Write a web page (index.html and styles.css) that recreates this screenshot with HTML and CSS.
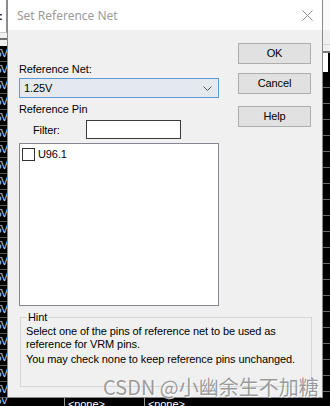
FILE: index.html
```html
<!DOCTYPE html>
<html lang="en">
<head>
    <meta charset="UTF-8">
    <meta name="viewport" content="width=device-width, initial-scale=1.0">
    <title>Set Reference Net</title>
    <link rel="stylesheet" href="styles.css">
</head>
<body>
    <div class="screen">
        <!-- Aplicación de fondo: columna izquierda -->
        <div class="app-left">
            <div class="left-field">:</div>
            <div class="left-bar"></div>
            <div class="cells">
                <div class="cell">5V</div><div class="cell">5V</div><div class="cell">5V</div>
                <div class="cell">5V</div><div class="cell">5V</div><div class="cell">5V</div>
                <div class="cell">5V</div><div class="cell">5V</div><div class="cell">5V</div>
                <div class="cell">5V</div><div class="cell">5V</div><div class="cell">5V</div>
                <div class="cell">5V</div><div class="cell">5V</div><div class="cell">5V</div>
                <div class="cell">5V</div><div class="cell">5V</div><div class="cell">5V</div>
                <div class="cell">5V</div><div class="cell">5V</div><div class="cell">5V</div>
                <div class="cell">5V</div>
            </div>
        </div>

        <!-- Diálogo -->
        <div class="dialog">
            <div class="titlebar">
                <span class="title">Set Reference Net</span>
                <svg class="close" width="11" height="11" viewBox="0 0 11 11">
                    <path d="M0.5 0.5 L10.5 10.5 M10.5 0.5 L0.5 10.5" stroke="#8f8f8f" stroke-width="1" fill="none"/>
                </svg>
            </div>

            <div class="dialog-body">
                <div class="main">
                    <div class="left-col">
                        <div class="lbl">Reference Net:</div>
                        <div class="combo">
                            <span>1.25V</span>
                            <svg class="chevron" width="9" height="5" viewBox="0 0 9 5">
                                <path d="M0.5 0.5 L4.5 4.5 L8.5 0.5" stroke="#555" stroke-width="1" fill="none"/>
                            </svg>
                        </div>
                        <div class="lbl section">Reference Pin</div>
                        <div class="filter-row">
                            <span class="filter-lbl">Filter:</span>
                            <div class="input"></div>
                        </div>
                        <div class="listbox">
                            <div class="item"><span class="check"></span>U96.1</div>
                        </div>
                    </div>

                    <div class="buttons">
                        <div class="btn">OK</div>
                        <div class="btn cancel">Cancel</div>
                        <div class="btn help">Help</div>
                    </div>
                </div>

                <fieldset class="hint">
                    <legend>Hint</legend>
                    <p>Select one of the pins of reference net to be used as<br>reference for VRM pins.</p>
                    <p class="second">You may check none to keep reference pins unchanged.</p>
                </fieldset>
            </div>

            <div class="watermark">CSDN @小幽余生不加糖</div>
        </div>

        <!-- Aplicación de fondo: columna derecha -->
        <div class="app-right">
            <div class="right-head"></div>
            <div class="right-bar"></div>
            <div class="right-cell"></div>
            <div class="rcells">
                <div class="rcell"></div><div class="rcell"></div><div class="rcell"></div>
                <div class="rcell"></div><div class="rcell"></div><div class="rcell"></div>
                <div class="rcell"></div><div class="rcell"></div><div class="rcell"></div>
                <div class="rcell"></div><div class="rcell"></div><div class="rcell"></div>
                <div class="rcell"></div><div class="rcell"></div><div class="rcell"></div>
                <div class="rcell"></div><div class="rcell"></div><div class="rcell"></div>
                <div class="rcell"></div><div class="rcell"></div>
            </div>
        </div>

        <!-- Fila inferior -->
        <div class="app-bottom">
            <div class="bcol first"><span class="bv">5V</span></div>
            <div class="bcol">&lt;none&gt;</div>
            <div class="bcol">&lt;none&gt;</div>
        </div>
    </div>
</body>
</html>
```

FILE: styles.css
```css
* {
    box-sizing: border-box;
}

body {
    margin: 0;
    font-family: "Liberation Sans", Arial, sans-serif;
    font-size: 11px;
    letter-spacing: -0.1px;
    background-color: #000;
}

.screen {
    display: grid;
    grid-template-columns: 7px 316px 7px;
    grid-template-rows: 398px 8px;
    width: 330px;
    height: 406px;
    overflow: hidden;
}

/* Columna izquierda de fondo */
.app-left {
    display: flex;
    flex-direction: column;
    overflow: hidden;
    background-color: #000;
}

.left-field {
    height: 37px;
    background-color: #fff;
    border-right: 1px solid #8c8c8c;
    border-bottom: 1px solid #c8c8c8;
    font-weight: bold;
    line-height: 12px;
    padding-top: 10px;
    margin-left: -1px;
}

.left-bar {
    height: 14px;
    background-color: #f0f0f0;
    border-top: 5px solid #f0f0f0;
    box-shadow: inset 0 2px 0 #6e6e6e;
}

.cell {
    height: 16px;
    display: flex;
    justify-content: flex-end;
    border-bottom: 1px solid #5a5a5a;
    color: #a9d2ff;
    font-size: 11px;
    letter-spacing: -1px;
    line-height: 15px;
    white-space: nowrap;
}

/* Diálogo */
.dialog {
    position: relative;
    display: flex;
    flex-direction: column;
    background-color: #f0f0f0;
    border: 1px solid #8a8a8a;
    border-top: none;
}

.titlebar {
    height: 30px;
    flex-shrink: 0;
    display: flex;
    align-items: center;
    justify-content: space-between;
    background-color: #fff;
    padding: 0 9px 0 9px;
}

.title {
    font-family: "Noto Sans", "Liberation Sans", sans-serif;
    font-size: 12px;
    letter-spacing: 0;
    color: #9b9b9b;
}

.close {
    display: block;
    margin-top: 1px;
}

.dialog-body {
    padding: 13px 11px 0 11px;
}

.main {
    display: flex;
    justify-content: space-between;
}

.left-col {
    width: 200px;
    padding-top: 19px;
}

.lbl {
    line-height: 14px;
    color: #000;
}

.combo {
    height: 20px;
    margin-top: 2px;
    display: flex;
    align-items: center;
    justify-content: space-between;
    padding: 0 6px 0 4px;
    background-color: #e3e9ef;
    border: 1px solid #5b9bd5;
}

.chevron {
    display: block;
    margin-top: 1px;
}

.section {
    margin-top: 4px;
}

.filter-row {
    display: flex;
    align-items: center;
    margin-top: 4px;
    padding-left: 14px;
}

.filter-lbl {
    width: 53px;
}

.input {
    width: 95px;
    height: 19px;
    background-color: #fff;
    border: 1px solid #3a3a3a;
}

.listbox {
    height: 163px;
    margin-top: 4px;
    background-color: #fff;
    border: 1px solid #828790;
    padding: 3px 2px;
}

.item {
    display: flex;
    align-items: flex-start;
    line-height: 14px;
    color: #000;
}

.check {
    width: 13px;
    height: 13px;
    margin-top: 1px;
    margin-right: 3px;
    background-color: #fff;
    border: 1px solid #333;
}

.buttons {
    width: 73px;
}

.btn {
    height: 21px;
    line-height: 19px;
    text-align: center;
    background-color: #e1e1e1;
    border: 1px solid #adadad;
    color: #000;
}

.btn.cancel {
    margin-top: 9px;
}

.btn.help {
    margin-top: 12px;
}

/* Cuadro de ayuda */
.hint {
    width: 292px;
    height: 77px;
    margin: 4px -2px 0 1px;
    padding: 0 6px 0 5px;
    border: 1px solid #d6d6d6;
}

.hint legend {
    padding: 0 1px;
    margin-left: 1px;
    line-height: 14px;
    color: #000;
}

.hint p {
    margin: 1px 0 0 0;
    line-height: 13px;
    white-space: nowrap;
    color: #000;
}

.hint p.second {
    margin-top: 2px;
}

.watermark {
    position: absolute;
    left: 95px;
    top: 377px;
    font-family: "Noto Sans CJK SC", sans-serif;
    font-size: 20px;
    line-height: 20px;
    letter-spacing: 0;
    white-space: nowrap;
    color: rgba(125, 125, 125, 0.75);
    text-shadow: 1px 1px 0 rgba(255, 255, 255, 0.8);
}

/* Columna derecha de fondo */
.app-right {
    display: flex;
    flex-direction: column;
    overflow: hidden;
    background-color: #000;
}

.right-head {
    height: 51px;
    background-color: #f0f0f0;
    border-top: 30px solid #fafafa;
    box-shadow: inset 0 -6px 0 #f0f0f0, inset 0 -7px 0 #d4d4d4;
}

.right-bar {
    height: 2px;
    background-color: #7a7a7a;
}

.right-cell {
    height: 19px;
    background-color: #fff;
    border-right: 2px solid #000;
}

.rcell {
    height: 16px;
    border-bottom: 1px solid #6a6a6a;
}

/* Fila inferior de fondo */
.app-bottom {
    grid-column: 1 / -1;
    display: flex;
    background-color: #000;
    overflow: hidden;
}

.bcol {
    width: 80px;
    padding-left: 3px;
    border-left: 1px solid #9a9a9a;
    color: #fff;
    font-size: 11px;
    line-height: 11px;
    padding-top: 1px;
    white-space: nowrap;
}

.bcol.first {
    width: 64px;
    border-left: none;
    padding-left: 0;
}

.bv {
    display: flex;
    justify-content: flex-end;
    width: 7px;
    color: #a9d2ff;
    font-size: 11px;
    letter-spacing: -1px;
    margin-top: -4px;
}
```
